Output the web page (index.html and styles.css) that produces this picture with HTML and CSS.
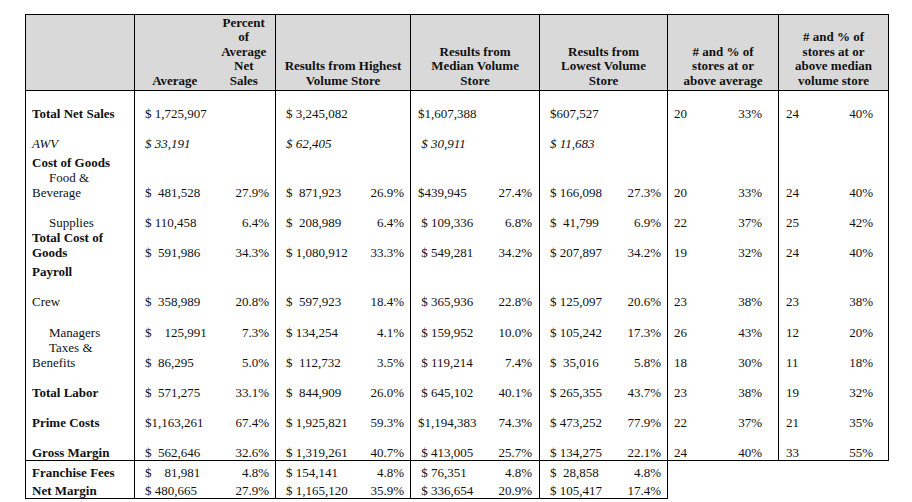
FILE: index.html
```html
<!DOCTYPE html>
<html>
<head>
<meta charset="utf-8">
<link rel="stylesheet" href="styles.css">
</head>
<body>
<table class="report">
  <colgroup>
    <col class="w-lab"><col class="w-av"><col class="w-ap"><col class="w-hv"><col class="w-hp"><col class="w-mv"><col class="w-mp"><col class="w-lv"><col class="w-lp"><col class="w-n1"><col class="w-p1"><col class="w-n2"><col class="w-p2">
  </colgroup>
  <thead>
    <tr class="head">
      <th class="lab"></th>
      <th class="av">Average</th>
      <th class="ap">Percent<br>of<br>Average<br>Net<br>Sales</th>
      <th class="hv" colspan="2">Results from Highest<br>Volume Store</th>
      <th class="mv" colspan="2">Results from<br>Median Volume<br>Store</th>
      <th class="lv" colspan="2">Results from<br>Lowest Volume<br>Store</th>
      <th class="n1" colspan="2"># and % of<br>stores at or<br>above average</th>
      <th class="n2 p2" colspan="2"># and % of<br>stores at or<br>above median<br>volume store</th>
    </tr>
  </thead>
  <tbody>
    <tr class="h30">
      <td class="lab b">Total Net Sales</td>
      <td class="av">$ 1,725,907</td><td class="ap"></td>
      <td class="hv">$ 3,245,082</td><td class="hp"></td>
      <td class="mv">$1,607,388</td><td class="mp"></td>
      <td class="lv">$607,527</td><td class="lp"></td>
      <td class="n1">20</td><td class="p1">33%</td>
      <td class="n2">24</td><td class="p2">40%</td>
    </tr>
    <tr class="h30 it">
      <td class="lab">AWV</td>
      <td class="av">$ 33,191</td><td class="ap"></td>
      <td class="hv">$ 62,405</td><td class="hp"></td>
      <td class="mv"> $ 30,911</td><td class="mp"></td>
      <td class="lv">$ 11,683</td><td class="lp"></td>
      <td class="n1"></td><td class="p1"></td>
      <td class="n2"></td><td class="p2"></td>
    </tr>
    <tr class="h19">
      <td class="lab b">Cost of Goods</td>
      <td class="av"></td><td class="ap"></td>
      <td class="hv"></td><td class="hp"></td>
      <td class="mv"></td><td class="mp"></td>
      <td class="lv"></td><td class="lp"></td>
      <td class="n1"></td><td class="p1"></td>
      <td class="n2"></td><td class="p2"></td>
    </tr>
    <tr class="h30">
      <td class="lab ind">Food &amp;<br>Beverage</td>
      <td class="av">$  481,528</td><td class="ap">27.9%</td>
      <td class="hv">$  871,923</td><td class="hp">26.9%</td>
      <td class="mv">$439,945</td><td class="mp">27.4%</td>
      <td class="lv">$ 166,098</td><td class="lp">27.3%</td>
      <td class="n1">20</td><td class="p1">33%</td>
      <td class="n2">24</td><td class="p2">40%</td>
    </tr>
    <tr class="h30">
      <td class="lab ind">Supplies</td>
      <td class="av">$ 110,458</td><td class="ap">6.4%</td>
      <td class="hv">$  208,989</td><td class="hp">6.4%</td>
      <td class="mv"> $ 109,336</td><td class="mp">6.8%</td>
      <td class="lv">$  41,799</td><td class="lp">6.9%</td>
      <td class="n1">22</td><td class="p1">37%</td>
      <td class="n2">25</td><td class="p2">42%</td>
    </tr>
    <tr class="h30">
      <td class="lab b">Total Cost of<br>Goods</td>
      <td class="av">$  591,986</td><td class="ap">34.3%</td>
      <td class="hv">$ 1,080,912</td><td class="hp">33.3%</td>
      <td class="mv"> $ 549,281</td><td class="mp">34.2%</td>
      <td class="lv">$ 207,897</td><td class="lp">34.2%</td>
      <td class="n1">19</td><td class="p1">32%</td>
      <td class="n2">24</td><td class="p2">40%</td>
    </tr>
    <tr class="h19">
      <td class="lab b">Payroll</td>
      <td class="av"></td><td class="ap"></td>
      <td class="hv"></td><td class="hp"></td>
      <td class="mv"></td><td class="mp"></td>
      <td class="lv"></td><td class="lp"></td>
      <td class="n1"></td><td class="p1"></td>
      <td class="n2"></td><td class="p2"></td>
    </tr>
    <tr class="h30">
      <td class="lab">Crew</td>
      <td class="av">$  358,989</td><td class="ap">20.8%</td>
      <td class="hv">$  597,923</td><td class="hp">18.4%</td>
      <td class="mv"> $ 365,936</td><td class="mp">22.8%</td>
      <td class="lv">$ 125,097</td><td class="lp">20.6%</td>
      <td class="n1">23</td><td class="p1">38%</td>
      <td class="n2">23</td><td class="p2">38%</td>
    </tr>
    <tr class="h31">
      <td class="lab ind">Managers</td>
      <td class="av">$    125,991</td><td class="ap">7.3%</td>
      <td class="hv">$ 134,254</td><td class="hp">4.1%</td>
      <td class="mv"> $ 159,952</td><td class="mp">10.0%</td>
      <td class="lv">$ 105,242</td><td class="lp">17.3%</td>
      <td class="n1">26</td><td class="p1">43%</td>
      <td class="n2">12</td><td class="p2">20%</td>
    </tr>
    <tr class="h30">
      <td class="lab ind">Taxes &amp;<br>Benefits</td>
      <td class="av">$  86,295</td><td class="ap">5.0%</td>
      <td class="hv">$  112,732</td><td class="hp">3.5%</td>
      <td class="mv"> $ 119,214</td><td class="mp">7.4%</td>
      <td class="lv">$  35,016</td><td class="lp">5.8%</td>
      <td class="n1">18</td><td class="p1">30%</td>
      <td class="n2">11</td><td class="p2">18%</td>
    </tr>
    <tr class="h30">
      <td class="lab b">Total Labor</td>
      <td class="av">$  571,275</td><td class="ap">33.1%</td>
      <td class="hv">$  844,909</td><td class="hp">26.0%</td>
      <td class="mv"> $ 645,102</td><td class="mp">40.1%</td>
      <td class="lv">$ 265,355</td><td class="lp">43.7%</td>
      <td class="n1">23</td><td class="p1">38%</td>
      <td class="n2">19</td><td class="p2">32%</td>
    </tr>
    <tr class="h30">
      <td class="lab b">Prime Costs</td>
      <td class="av">$1,163,261</td><td class="ap">67.4%</td>
      <td class="hv">$ 1,925,821</td><td class="hp">59.3%</td>
      <td class="mv">$1,194,383</td><td class="mp">74.3%</td>
      <td class="lv">$ 473,252</td><td class="lp">77.9%</td>
      <td class="n1">22</td><td class="p1">37%</td>
      <td class="n2">21</td><td class="p2">35%</td>
    </tr>
    <tr class="h31 rule">
      <td class="lab b">Gross Margin</td>
      <td class="av">$  562,646</td><td class="ap">32.6%</td>
      <td class="hv">$ 1,319,261</td><td class="hp">40.7%</td>
      <td class="mv"> $ 413,005</td><td class="mp">25.7%</td>
      <td class="lv">$ 134,275</td><td class="lp">22.1%</td>
      <td class="n1">24</td><td class="p1">40%</td>
      <td class="n2">33</td><td class="p2">55%</td>
    </tr>
    <tr class="h19">
      <td class="lab b">Franchise Fees</td>
      <td class="av">$    81,981</td><td class="ap">4.8%</td>
      <td class="hv">$ 154,141</td><td class="hp">4.8%</td>
      <td class="mv"> $ 76,351</td><td class="mp">4.8%</td>
      <td class="lv">$  28,858</td><td class="lp">4.8%</td>
      <td class="blank"></td><td class="blank"></td>
      <td class="blank"></td><td class="blank"></td>
    </tr>
    <tr class="h19 last">
      <td class="lab b">Net Margin</td>
      <td class="av">$ 480,665</td><td class="ap">27.9%</td>
      <td class="hv">$ 1,165,120</td><td class="hp">35.9%</td>
      <td class="mv"> $ 336,654</td><td class="mp">20.9%</td>
      <td class="lv">$ 105,417</td><td class="lp">17.4%</td>
      <td class="blank"></td><td class="blank"></td>
      <td class="blank"></td><td class="blank"></td>
    </tr>
  </tbody>
</table>
</body>
</html>
```
FILE: styles.css
```css
html, body {
  margin: 0;
  padding: 0;
  background: #ffffff;
}

body {
  font-family: "Liberation Serif", "Times New Roman", serif;
  font-size: 13px;
  color: #111111;
}

.report {
  border-collapse: collapse;
  table-layout: fixed;
  width: 863px;
  margin: 14px 0 0 25px;
}

.w-lab { width: 109px; }
.w-av { width: 80px; }
.w-ap { width: 61px; }
.w-hv { width: 80px; }
.w-hp { width: 55px; }
.w-mv { width: 75px; }
.w-mp { width: 54px; }
.w-lv { width: 75px; }
.w-lp { width: 53px; }
.w-n1 { width: 50px; }
.w-p1 { width: 61px; }
.w-n2 { width: 50px; }
.w-p2 { width: 60px; }

.report td,
.report th {
  padding: 0;
  vertical-align: bottom;
  white-space: pre;
  line-height: 15px;
}

.head {
  height: 76px;
}

.head th {
  background: #d9d9d9;
  font-weight: bold;
  text-align: center;
  line-height: 14.5px;
  padding-bottom: 2px;
  border-top: 1px solid #000;
  border-bottom: 1px solid #000;
  white-space: nowrap;
}

.head th.ap {
  padding-right: 2px;
}

.lab {
  border-left: 1px solid #000;
  text-align: left;
}

.report td.lab {
  padding-left: 6px;
  white-space: nowrap;
}

.b { font-weight: bold; }
.it td { font-style: italic; }
.ind { text-indent: 17px; }

.av, .hv, .mv, .lv, .n1, .n2 {
  border-left: 1px solid #000;
  text-align: left;
}

.report td.av { padding-left: 10px; }
.report td.hv { padding-left: 10px; }
.report td.mv { padding-left: 7px; }
.report td.lv { padding-left: 10px; }
.report td.n1 { padding-left: 6px; }
.report td.n2 { padding-left: 7px; }

.ap, .hp, .mp, .lp, .p1, .p2 {
  text-align: right;
}

.report td.ap { padding-right: 6px; }
.report td.hp { padding-right: 6px; }
.report td.mp { padding-right: 7px; }
.report td.lp { padding-right: 6px; }
.report td.p1 { padding-right: 16px; }
.report td.p2 { padding-right: 15px; }

.p2 {
  border-right: 1px solid #000;
}

.report td.blank {
  border: none;
}

.report td.lp {
  border-right: 1px solid #000;
}

.h30 { height: 30px; }
.h31 { height: 31px; }
.h19 { height: 19px; }
.h18 { height: 18px; }

.rule td {
  border-bottom: 1px solid #000;
}

.last td {
  border-bottom: 1px solid #000;
}

.last td.blank {
  border-bottom: none;
}
```
